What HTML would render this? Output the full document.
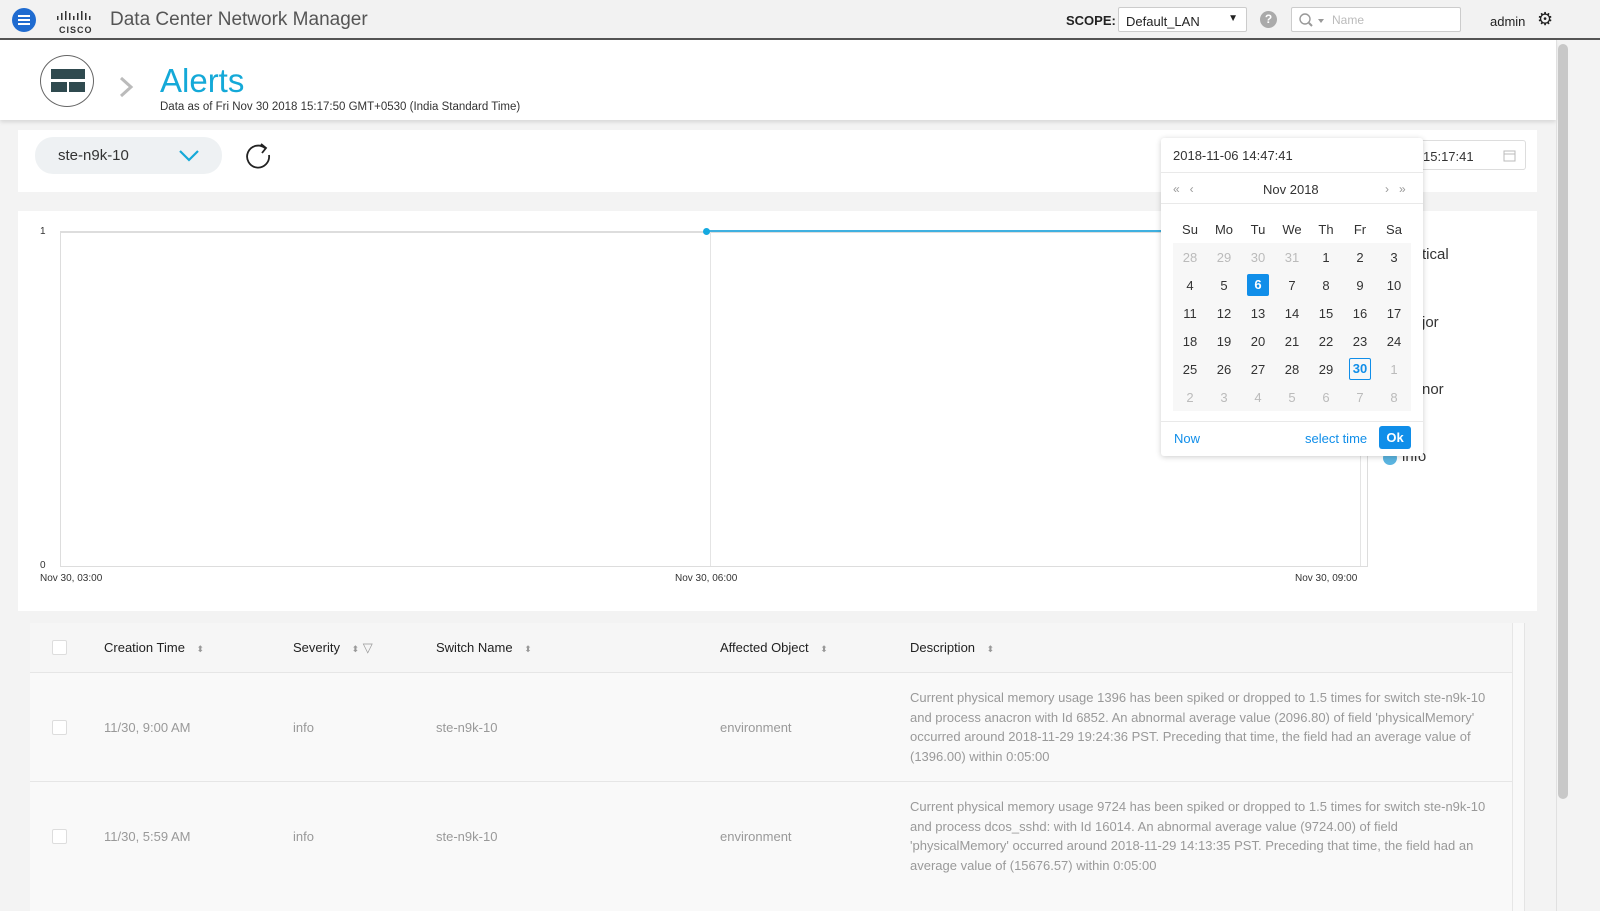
<!DOCTYPE html>
<html><head><meta charset="utf-8"><style>
*{box-sizing:border-box;margin:0;padding:0}
body{width:1600px;height:911px;overflow:hidden;background:#f3f3f3;font-family:"Liberation Sans",sans-serif;color:#333;position:relative}
.abs{position:absolute}
.top{left:0;top:0;width:1600px;height:40px;background:#f2f2f2;border-bottom:2px solid #555}
.hdr{left:0;top:40px;width:1556px;height:80px;background:#fff;box-shadow:0 2px 4px rgba(0,0,0,.12)}
.cal td{width:34px;height:28px;text-align:center;font-size:13px;color:#333}
.cal td.g{color:#bbb}
.th{font-size:13px;color:#222;top:640px}
.td{font-size:13px;color:#999}
.desc{font-size:13px;color:#999;line-height:19.7px;white-space:nowrap}
.cb{width:15px;height:15px;border:1px solid #ddd;border-radius:2px;background:#fff}
</style></head><body>
<div class="abs top">
 <svg class="abs" style="left:12px;top:8px" width="24" height="24"><circle cx="12" cy="12" r="12" fill="#1f6bd0"/><rect x="6" y="7" width="12" height="2" fill="#fff"/><rect x="6" y="11" width="12" height="2" fill="#fff"/><rect x="6" y="15" width="12" height="2" fill="#fff"/></svg>
 <div class="abs" style="left:55px;top:8px;width:42px;">
  <svg width="42" height="10"><g fill="#333"><rect x="2" y="5" width="1.5" height="4"/><rect x="6" y="2" width="1.5" height="7"/><rect x="10" y="0" width="1.5" height="9"/><rect x="14" y="2" width="1.5" height="7"/><rect x="18" y="5" width="1.5" height="4"/><rect x="22" y="2" width="1.5" height="7"/><rect x="26" y="0" width="1.5" height="9"/><rect x="30" y="2" width="1.5" height="7"/><rect x="34" y="5" width="1.5" height="4"/></g></svg>
  <div style="font-size:9px;font-weight:bold;letter-spacing:1px;margin-top:-1px;padding-left:4px">CISCO</div>
 </div>
 <div class="abs" style="left:110px;top:9px;font-size:19px;color:#555">Data Center Network Manager</div>
 <div class="abs" style="left:1066px;top:13px;font-size:13px;font-weight:bold;color:#222">SCOPE:</div>
 <div class="abs" style="left:1118px;top:7px;width:129px;height:25px;border:1px solid #ccc;border-radius:2px;background:#fff;font-size:13px;padding:6px 7px;color:#222">Default_LAN<span style="position:absolute;right:8px;top:5px;font-size:10px">▼</span></div>
 <div class="abs" style="left:1260px;top:11px;width:17px;height:17px;border-radius:50%;background:#aaa;color:#fff;font-size:12px;font-weight:bold;text-align:center;line-height:17px">?</div>
 <div class="abs" style="left:1291px;top:7px;width:170px;height:25px;border:1px solid #ccc;border-radius:2px;background:#fff;font-size:12px;color:#bbb;padding:5px 0 0 40px">Name
  <svg class="abs" style="left:6px;top:4px" width="30" height="16"><circle cx="7" cy="7" r="5" fill="none" stroke="#999" stroke-width="1.4"/><line x1="11" y1="11" x2="14" y2="14" stroke="#999" stroke-width="2"/><path d="M20 7h6l-3 4z" fill="#999"/></svg></div>
 <div class="abs" style="left:1490px;top:14px;font-size:13px;color:#222">admin</div>
 <div class="abs" style="left:1537px;top:9px;font-size:18px;color:#222">⚙</div>
</div>
<div class="abs hdr">
 <div class="abs" style="left:40px;top:15px;width:54px;height:52px;border:1px solid #666;border-radius:50%;background:#fff">
  <svg class="abs" style="left:10px;top:13px" width="34" height="25"><rect x="0" y="0" width="34" height="10" fill="#2f4a4f"/><rect x="0" y="13" width="16" height="10" fill="#2f4a4f"/><rect x="18" y="13" width="16" height="10" fill="#2f4a4f"/></svg>
 </div>
 <svg class="abs" style="left:118px;top:36px" width="16" height="22"><path d="M3 2l10 9-10 9" fill="none" stroke="#bbb" stroke-width="3"/></svg>
 <div class="abs" style="left:160px;top:22px;font-size:33px;color:#14a9d8">Alerts</div>
 <div class="abs" style="left:160px;top:61px;font-size:11.5px;color:#333">Data as of Fri Nov 30 2018 15:17:50 GMT+0530 (India Standard Time)</div>
</div>
<div class="abs" style="left:1558px;top:44px;width:10px;height:755px;background:#c8c8c8;border-radius:5px"></div>
<div class="abs" style="left:1556px;top:40px;width:1px;height:871px;background:#e0e0e0"></div>
<div class="abs" style="left:18px;top:130px;width:1519px;height:62px;background:#fff">
 <div class="abs" style="left:17px;top:7px;width:187px;height:37px;background:#eef1f3;border-radius:18px;font-size:15px;color:#333;padding:10px 23px">ste-n9k-10
  <svg class="abs" style="left:143px;top:12px" width="22" height="14"><path d="M2 2l9 9 9-9" fill="none" stroke="#14a9d8" stroke-width="2.2"/></svg></div>
 <svg class="abs" style="left:225px;top:11px" width="30" height="30"><path d="M22 7A11 11 0 1 0 26 14" fill="none" stroke="#222" stroke-width="1.8"/><path d="M18 3l5 4-4 5" fill="none" stroke="#222" stroke-width="1.8"/></svg>
 <div class="abs" style="left:1380px;top:10px;width:128px;height:30px;border:1px solid #ddd;border-radius:3px;font-size:13px;padding:8px 0 0 24px;color:#333">15:17:41
  <svg class="abs" style="left:104px;top:8px" width="13" height="13"><rect x="1" y="2" width="11" height="10" fill="none" stroke="#bbb"/><line x1="1" y1="5" x2="12" y2="5" stroke="#bbb"/></svg></div>
</div>
<div class="abs" style="left:18px;top:211px;width:1519px;height:400px;background:#fff"></div>
<div class="abs" style="left:40px;top:226px;font-size:10px">1</div>
<div class="abs" style="left:40px;top:560px;font-size:10px">0</div>
<div class="abs" style="left:60px;top:231px;width:1308px;height:336px;border:1px solid #ddd;border-top:2px solid #ddd"></div>
<div class="abs" style="left:710px;top:232px;width:1px;height:334px;background:#e4e4e4"></div>
<div class="abs" style="left:1360px;top:232px;width:1px;height:334px;background:#e4e4e4"></div>
<div class="abs" style="left:706px;top:230px;width:460px;height:2px;background:#3fb0e0"></div>
<div class="abs" style="left:703px;top:228px;width:7px;height:7px;border-radius:50%;background:#14a9e0"></div>
<div class="abs" style="left:40px;top:573px;font-size:10px">Nov 30, 03:00</div>
<div class="abs" style="left:675px;top:573px;font-size:10px">Nov 30, 06:00</div>
<div class="abs" style="left:1295px;top:573px;font-size:10px">Nov 30, 09:00</div>
<div class="abs" style="left:1422px;top:246px;font-size:15px">tical</div>
<div class="abs" style="left:1422px;top:314px;font-size:15px">jor</div>
<div class="abs" style="left:1422px;top:381px;font-size:15px">nor</div>
<div class="abs" style="left:1383px;top:451px;width:14px;height:14px;border-radius:50%;background:#5ab4e0"></div>
<div class="abs" style="left:1402px;top:448px;font-size:15px">info</div>
<div class="abs" style="left:30px;top:623px;width:1495px;height:288px;background:#f9f9f9;border-right:1px solid #e4e4e4"></div>
<div class="abs" style="left:30px;top:623px;width:1482px;height:50px;background:#f6f6f6;border-bottom:1px solid #e6e6e6"></div>
<div class="abs" style="left:1512px;top:623px;width:1px;height:288px;background:#e6e6e6"></div>
<div class="abs" style="left:30px;top:781px;width:1482px;height:1px;background:#e6e6e6"></div>
<div class="abs cb" style="left:52px;top:640px"></div>
<div class="abs th" style="left:104px">Creation Time <span style="color:#999;font-size:9px;margin-left:8px">⬍</span></div>
<div class="abs th" style="left:293px">Severity <span style="color:#999;font-size:9px;margin-left:8px">⬍</span> <span style="color:#999">▽</span></div>
<div class="abs th" style="left:436px">Switch Name <span style="color:#999;font-size:9px;margin-left:8px">⬍</span></div>
<div class="abs th" style="left:720px">Affected Object <span style="color:#999;font-size:9px;margin-left:8px">⬍</span></div>
<div class="abs th" style="left:910px">Description <span style="color:#999;font-size:9px;margin-left:8px">⬍</span></div>
<div class="abs cb" style="left:52px;top:720px"></div>
<div class="abs td" style="left:104px;top:720px">11/30, 9:00 AM</div>
<div class="abs td" style="left:293px;top:720px">info</div>
<div class="abs td" style="left:436px;top:720px">ste-n9k-10</div>
<div class="abs td" style="left:720px;top:720px">environment</div>
<div class="abs desc" style="left:910px;top:688px">Current physical memory usage 1396 has been spiked or dropped to 1.5 times for switch ste-n9k-10<br>and process anacron with Id 6852. An abnormal average value (2096.80) of field 'physicalMemory'<br>occurred around 2018-11-29 19:24:36 PST. Preceding that time, the field had an average value of<br>(1396.00) within 0:05:00</div>
<div class="abs cb" style="left:52px;top:829px"></div>
<div class="abs td" style="left:104px;top:829px">11/30, 5:59 AM</div>
<div class="abs td" style="left:293px;top:829px">info</div>
<div class="abs td" style="left:436px;top:829px">ste-n9k-10</div>
<div class="abs td" style="left:720px;top:829px">environment</div>
<div class="abs desc" style="left:910px;top:797px">Current physical memory usage 9724 has been spiked or dropped to 1.5 times for switch ste-n9k-10<br>and process dcos_sshd: with Id 16014. An abnormal average value (9724.00) of field<br>'physicalMemory' occurred around 2018-11-29 14:13:35 PST. Preceding that time, the field had an<br>average value of (15676.57) within 0:05:00</div>
<div class="abs" style="left:1161px;top:138px;width:262px;height:318px;background:#fff;box-shadow:0 1px 6px rgba(0,0,0,.2);border-radius:3px">
 <div class="abs" style="left:12px;top:10px;font-size:13px;color:#333">2018-11-06 14:47:41</div>
 <div class="abs" style="left:0;top:34px;width:262px;height:1px;background:#e9e9e9"></div>
 <div class="abs" style="left:12px;top:44px;font-size:12px;color:#999">«&nbsp;&nbsp;&nbsp;‹</div>
 <div class="abs" style="left:102px;top:44px;font-size:13px;color:#333">Nov 2018</div>
 <div class="abs" style="left:224px;top:44px;font-size:12px;color:#999">›&nbsp;&nbsp;&nbsp;»</div>
 <div class="abs" style="left:0;top:65px;width:262px;height:1px;background:#e9e9e9"></div>
 <div class="abs" style="left:12px;top:105px;width:238px;height:168px;background:#f7f7f7"></div>
 <table class="abs cal" style="left:12px;top:77px;border-collapse:collapse">
  <tr><td>Su</td><td>Mo</td><td>Tu</td><td>We</td><td>Th</td><td>Fr</td><td>Sa</td></tr>
  <tr><td class="g">28</td><td class="g">29</td><td class="g">30</td><td class="g">31</td><td>1</td><td>2</td><td>3</td></tr>
  <tr><td>4</td><td>5</td><td><span style="display:inline-block;width:22px;height:22px;line-height:22px;background:#108ee9;color:#fff;font-weight:bold;border-radius:2px">6</span></td><td>7</td><td>8</td><td>9</td><td>10</td></tr>
  <tr><td>11</td><td>12</td><td>13</td><td>14</td><td>15</td><td>16</td><td>17</td></tr>
  <tr><td>18</td><td>19</td><td>20</td><td>21</td><td>22</td><td>23</td><td>24</td></tr>
  <tr><td>25</td><td>26</td><td>27</td><td>28</td><td>29</td><td><span style="display:inline-block;width:22px;height:22px;line-height:20px;border:1px solid #108ee9;color:#108ee9;font-weight:bold;border-radius:2px">30</span></td><td class="g">1</td></tr>
  <tr><td class="g">2</td><td class="g">3</td><td class="g">4</td><td class="g">5</td><td class="g">6</td><td class="g">7</td><td class="g">8</td></tr>
 </table>
 <div class="abs" style="left:0;top:283px;width:262px;height:1px;background:#e9e9e9"></div>
 <div class="abs" style="left:13px;top:293px;font-size:13px;color:#108ee9">Now</div>
 <div class="abs" style="left:144px;top:293px;font-size:13px;color:#108ee9">select time</div>
 <div class="abs" style="left:218px;top:288px;width:32px;height:23px;background:#108ee9;color:#fff;border-radius:3px;font-size:13px;font-weight:bold;text-align:center;line-height:23px">Ok</div>
</div>
</body></html>
